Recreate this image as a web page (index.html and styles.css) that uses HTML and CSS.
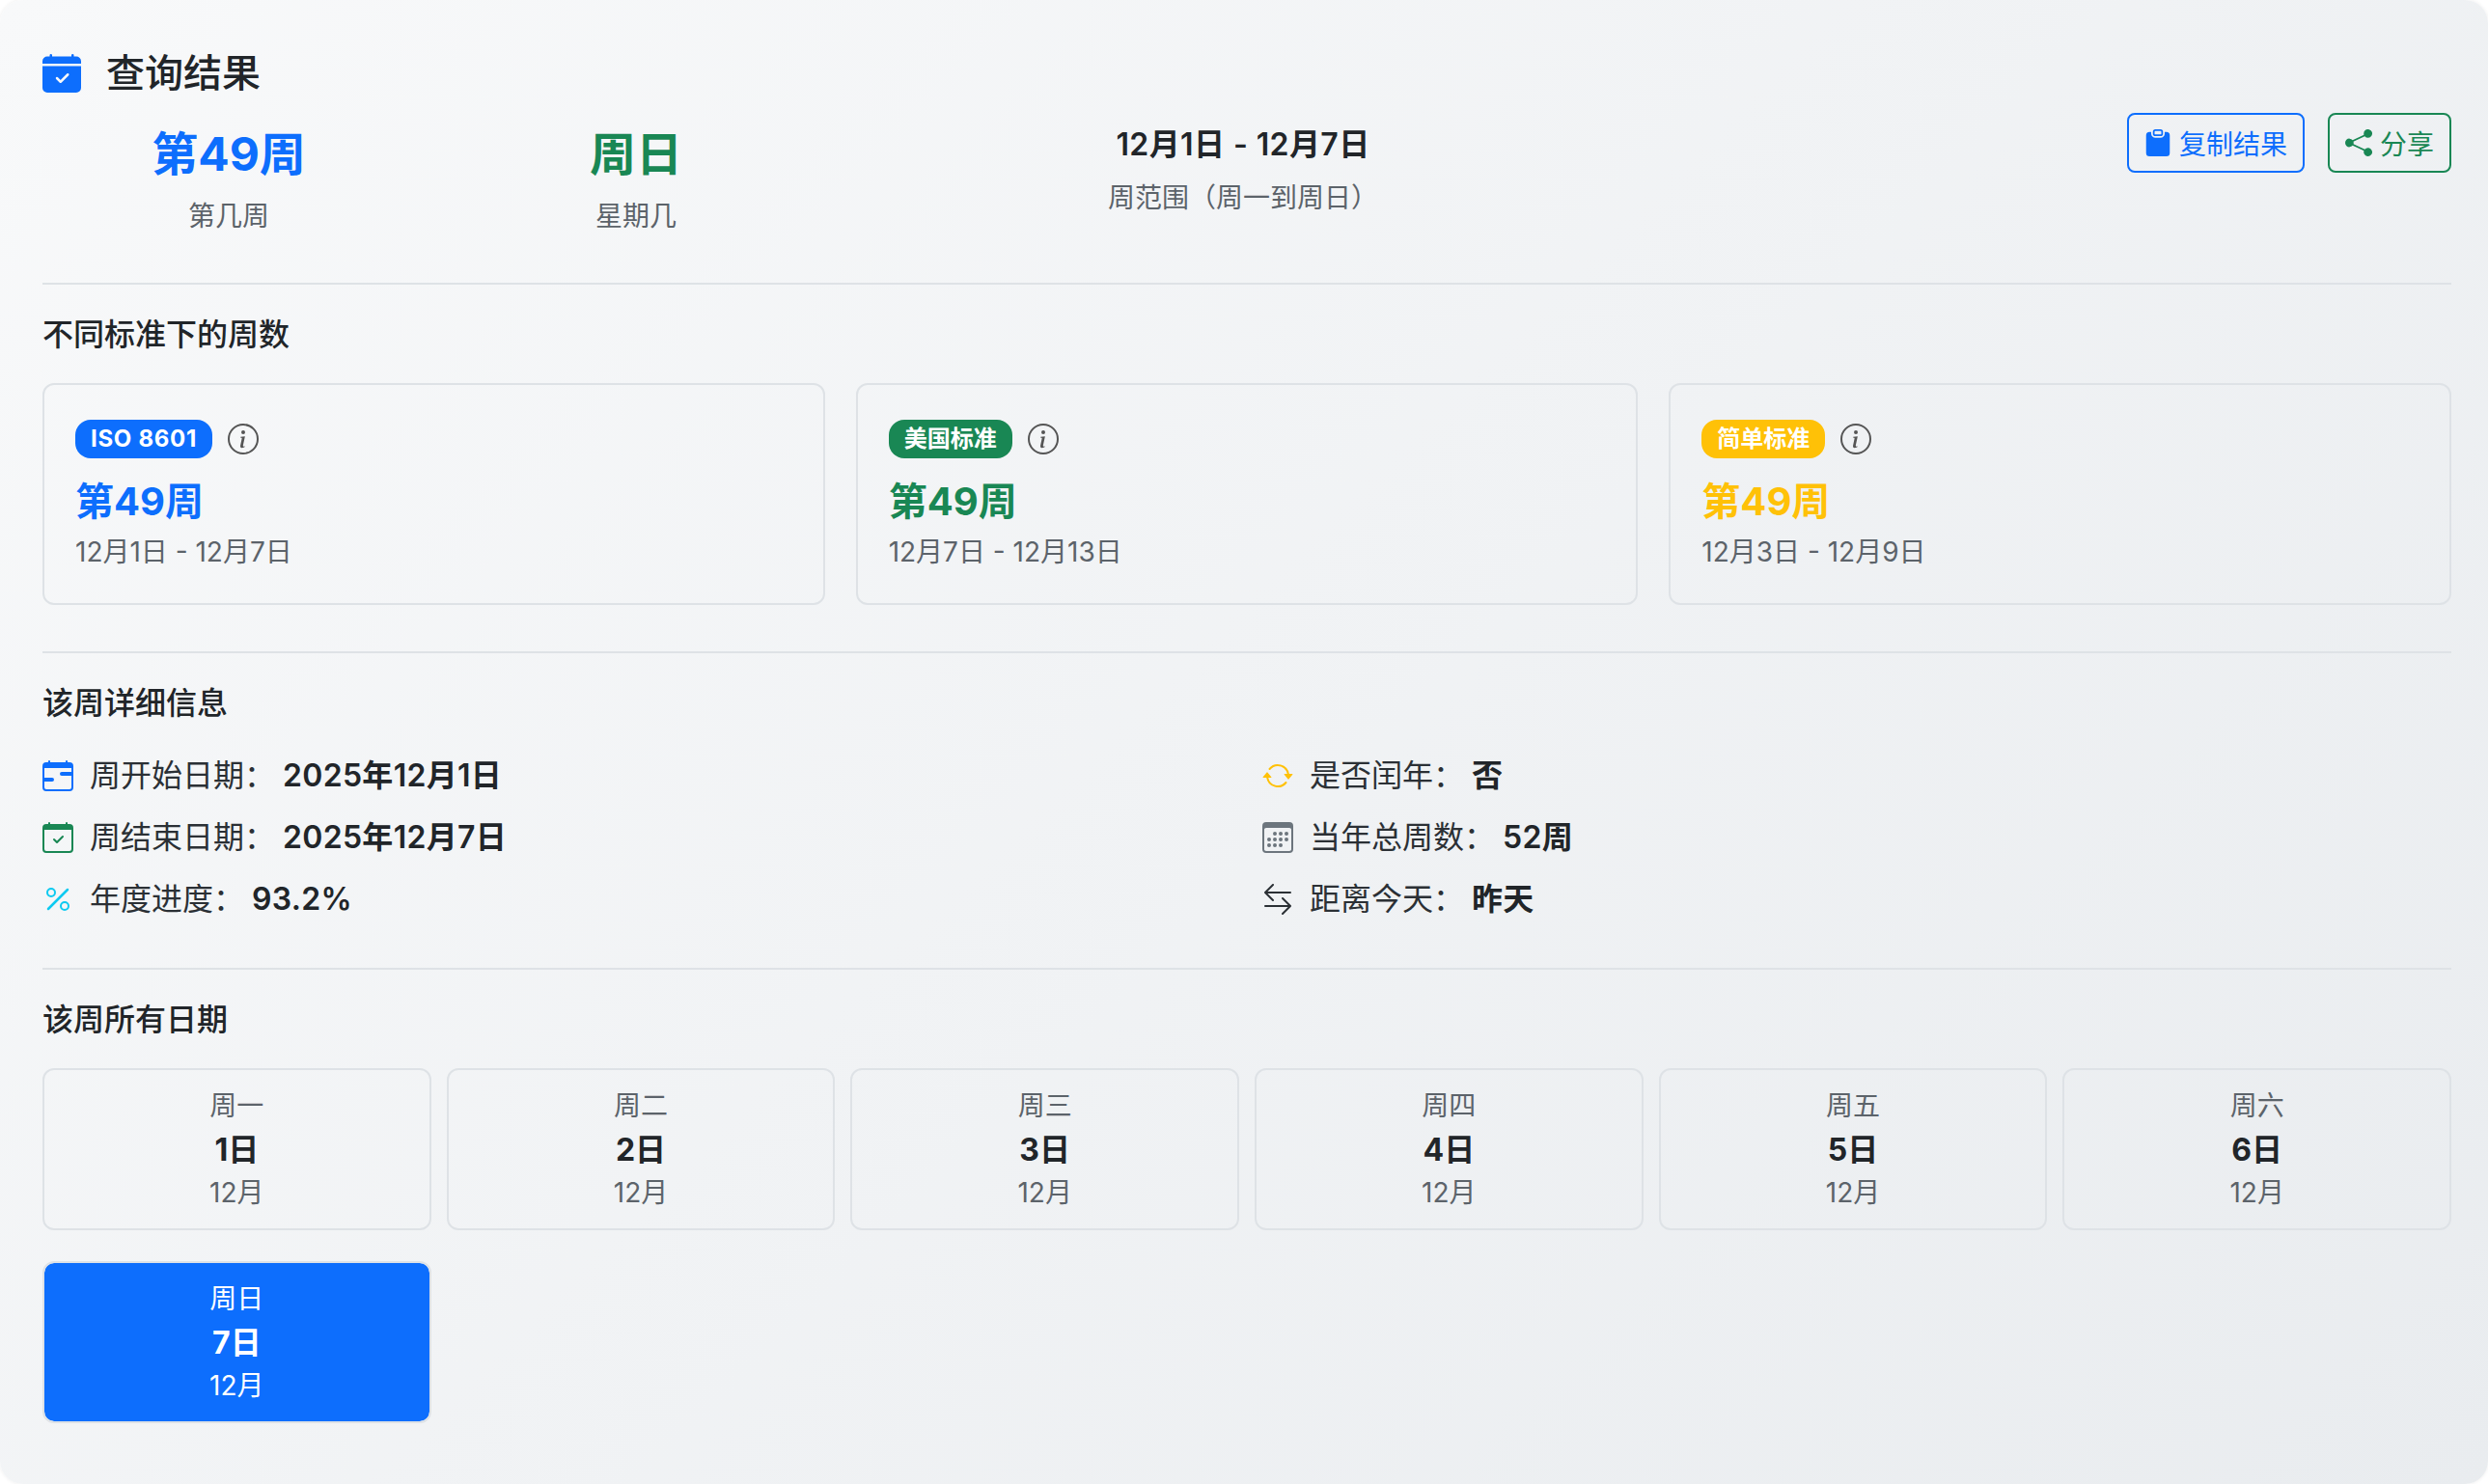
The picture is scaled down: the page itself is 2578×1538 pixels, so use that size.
FILE: index.html
```html
<!DOCTYPE html>
<html lang="zh-CN">
<head>
  <meta charset="UTF-8" />
  <meta name="viewport" content="width=device-width, initial-scale=1.0">
  <title>查询结果</title>
  <link rel="stylesheet" href="styles.css">
</head>
<body>
  <svg class="sprite" xmlns="http://www.w3.org/2000/svg">
    <symbol id="i-calendar-check-fill" viewBox="0 0 16 16"><path d="M4 .5a.5.5 0 0 0-1 0V1H2a2 2 0 0 0-2 2v1h16V3a2 2 0 0 0-2-2h-1V.5a.5.5 0 0 0-1 0V1H4V.5zM16 14V5H0v9a2 2 0 0 0 2 2h12a2 2 0 0 0 2-2zm-5.146-5.146-3 3a.5.5 0 0 1-.708 0l-1.5-1.5a.5.5 0 0 1 .708-.708L7.5 10.793l2.646-2.647a.5.5 0 0 1 .708.708z"/></symbol>
    <symbol id="i-clipboard-fill" viewBox="0 0 16 16"><path fill-rule="evenodd" d="M10 1.5a.5.5 0 0 0-.5-.5h-3a.5.5 0 0 0-.5.5v1a.5.5 0 0 0 .5.5h3a.5.5 0 0 0 .5-.5v-1Zm-5 0A1.5 1.5 0 0 1 6.5 0h3A1.5 1.5 0 0 1 11 1.5v1A1.5 1.5 0 0 1 9.5 4h-3A1.5 1.5 0 0 1 5 2.5v-1Zm-2 0h1v1A2.5 2.5 0 0 0 6.5 5h3A2.5 2.5 0 0 0 12 2.5v-1h1a2 2 0 0 1 2 2V14a2 2 0 0 1-2 2H3a2 2 0 0 1-2-2V3.5a2 2 0 0 1 2-2Z"/></symbol>
    <symbol id="i-share-fill" viewBox="0 0 16 16"><path d="M11 2.5a2.5 2.5 0 1 1 .603 1.628l-6.718 3.12a2.499 2.499 0 0 1 0 1.504l6.718 3.12a2.5 2.5 0 1 1-.488.876l-6.718-3.12a2.5 2.5 0 1 1 0-3.256l6.718-3.12A2.5 2.5 0 0 1 11 2.5z"/></symbol>
    <symbol id="i-info-circle" viewBox="0 0 16 16"><path d="M8 15A7 7 0 1 1 8 1a7 7 0 0 1 0 14zm0 1A8 8 0 1 0 8 0a8 8 0 0 0 0 16z"/><path d="m8.93 6.588-2.29.287-.082.38.45.083c.294.07.352.176.288.469l-.738 3.468c-.194.897.105 1.319.808 1.319.545 0 1.178-.252 1.465-.598l.088-.42c-.2.176-.492.246-.686.246-.275 0-.375-.193-.304-.533L8.93 6.588zM9 4.5a1 1 0 1 1-2 0 1 1 0 0 1 2 0z"/></symbol>
    <symbol id="i-calendar-range" viewBox="0 0 16 16"><path d="M9 7a1 1 0 0 1 1-1h5v2h-5a1 1 0 0 1-1-1zM1 9h4a1 1 0 0 1 0 2H1V9z"/><path d="M3.5 0a.5.5 0 0 1 .5.5V1h8V.5a.5.5 0 0 1 1 0V1h1a2 2 0 0 1 2 2v11a2 2 0 0 1-2 2H2a2 2 0 0 1-2-2V3a2 2 0 0 1 2-2h1V.5a.5.5 0 0 1 .5-.5zM1 4v10a1 1 0 0 0 1 1h12a1 1 0 0 0 1-1V4H1z"/></symbol>
    <symbol id="i-calendar-check" viewBox="0 0 16 16"><path d="M10.854 7.146a.5.5 0 0 1 0 .708l-3 3a.5.5 0 0 1-.708 0l-1.5-1.5a.5.5 0 1 1 .708-.708L7.5 9.793l2.646-2.647a.5.5 0 0 1 .708 0z"/><path d="M3.5 0a.5.5 0 0 1 .5.5V1h8V.5a.5.5 0 0 1 1 0V1h1a2 2 0 0 1 2 2v11a2 2 0 0 1-2 2H2a2 2 0 0 1-2-2V3a2 2 0 0 1 2-2h1V.5a.5.5 0 0 1 .5-.5zM1 4v10a1 1 0 0 0 1 1h12a1 1 0 0 0 1-1V4H1z"/></symbol>
    <symbol id="i-percent" viewBox="0 0 16 16"><path d="M13.442 2.558a.625.625 0 0 1 0 .884l-10 10a.625.625 0 1 1-.884-.884l10-10a.625.625 0 0 1 .884 0zM4.5 6a1.5 1.5 0 1 1 0-3 1.5 1.5 0 0 1 0 3zm0 1a2.5 2.5 0 1 0 0-5 2.5 2.5 0 0 0 0 5zm7 6a1.5 1.5 0 1 1 0-3 1.5 1.5 0 0 1 0 3zm0 1a2.5 2.5 0 1 0 0-5 2.5 2.5 0 0 0 0 5z"/></symbol>
    <symbol id="i-arrow-repeat" viewBox="0 0 16 16"><path d="M11.534 7h3.932a.25.25 0 0 1 .192.41l-1.966 2.36a.25.25 0 0 1-.384 0l-1.966-2.36a.25.25 0 0 1 .192-.41zm-11 2h3.932a.25.25 0 0 0 .192-.41L2.692 6.23a.25.25 0 0 0-.384 0L.342 8.59A.25.25 0 0 0 .534 9z"/><path fill-rule="evenodd" d="M8 3c-1.552 0-2.94.707-3.857 1.818a.5.5 0 1 1-.771-.636A6.002 6.002 0 0 1 13.917 7H12.9A5.002 5.002 0 0 0 8 3zM3.1 9a5.002 5.002 0 0 0 8.757 2.182.5.5 0 1 1 .771.636A6.002 6.002 0 0 1 2.083 9H3.1z"/></symbol>
    <symbol id="i-calendar3" viewBox="0 0 16 16"><path d="M14 0H2a2 2 0 0 0-2 2v12a2 2 0 0 0 2 2h12a2 2 0 0 0 2-2V2a2 2 0 0 0-2-2zM1 3.857C1 3.384 1.448 3 2 3h12c.552 0 1 .384 1 .857v10.286c0 .473-.448.857-1 .857H2c-.552 0-1-.384-1-.857V3.857z"/><path d="M6.5 7a1 1 0 1 0 0-2 1 1 0 0 0 0 2zm3 0a1 1 0 1 0 0-2 1 1 0 0 0 0 2zm3 0a1 1 0 1 0 0-2 1 1 0 0 0 0 2zm-9 3a1 1 0 1 0 0-2 1 1 0 0 0 0 2zm3 0a1 1 0 1 0 0-2 1 1 0 0 0 0 2zm3 0a1 1 0 1 0 0-2 1 1 0 0 0 0 2zm3 0a1 1 0 1 0 0-2 1 1 0 0 0 0 2zm-9 3a1 1 0 1 0 0-2 1 1 0 0 0 0 2zm3 0a1 1 0 1 0 0-2 1 1 0 0 0 0 2zm3 0a1 1 0 1 0 0-2 1 1 0 0 0 0 2z"/></symbol>
    <symbol id="i-arrow-left-right" viewBox="0 0 16 16"><path fill-rule="evenodd" d="M1 11.5a.5.5 0 0 0 .5.5h11.793l-3.147 3.146a.5.5 0 0 0 .708.708l4-4a.5.5 0 0 0 0-.708l-4-4a.5.5 0 0 0-.708.708L13.293 11H1.5a.5.5 0 0 0-.5.5zm14-7a.5.5 0 0 1-.5.5H2.707l3.147 3.146a.5.5 0 1 1-.708.708l-4-4a.5.5 0 0 1 0-.708l4-4a.5.5 0 1 1 .708.708L2.707 4H14.5a.5.5 0 0 1 .5.5z"/></symbol>
  </svg>

  <div class="resultado">
    <h2 class="cabecera">
      <svg class="icono icono-titulo azul"><use href="#i-calendar-check-fill"/></svg>
      查询结果
    </h2>

    <div class="resumen">
      <div class="dato">
        <div class="dato-grande azul">第49周</div>
        <div class="dato-nombre">第几周</div>
      </div>
      <div class="dato">
        <div class="dato-grande verde">周日</div>
        <div class="dato-nombre">星期几</div>
      </div>
      <div class="dato dato-rango">
        <div class="rango-valor">12月1日 - 12月7日</div>
        <div class="dato-nombre">周范围（周一到周日）</div>
      </div>
      <div class="acciones">
        <button class="boton boton-azul"><svg class="icono"><use href="#i-clipboard-fill"/></svg>复制结果</button>
        <button class="boton boton-verde"><svg class="icono"><use href="#i-share-fill"/></svg>分享</button>
      </div>
    </div>

    <hr class="separador">

    <h3 class="subtitulo">不同标准下的周数</h3>
    <div class="estandares">
      <div class="tarjeta">
        <div class="tarjeta-top">
          <span class="etiqueta etiqueta-latina fondo-azul">ISO 8601</span>
          <svg class="icono icono-info"><use href="#i-info-circle"/></svg>
        </div>
        <div class="semana azul">第49周</div>
        <div class="rango">12月1日 - 12月7日</div>
      </div>
      <div class="tarjeta">
        <div class="tarjeta-top">
          <span class="etiqueta fondo-verde">美国标准</span>
          <svg class="icono icono-info"><use href="#i-info-circle"/></svg>
        </div>
        <div class="semana verde">第49周</div>
        <div class="rango">12月7日 - 12月13日</div>
      </div>
      <div class="tarjeta">
        <div class="tarjeta-top">
          <span class="etiqueta fondo-amarillo">简单标准</span>
          <svg class="icono icono-info"><use href="#i-info-circle"/></svg>
        </div>
        <div class="semana amarillo">第49周</div>
        <div class="rango">12月3日 - 12月9日</div>
      </div>
    </div>

    <hr class="separador">

    <h3 class="subtitulo">该周详细信息</h3>
    <div class="detalles">
      <div class="detalle"><svg class="icono azul"><use href="#i-calendar-range"/></svg><span>周开始日期：</span><strong>2025年12月1日</strong></div>
      <div class="detalle"><svg class="icono amarillo"><use href="#i-arrow-repeat"/></svg><span>是否闰年：</span><strong>否</strong></div>
      <div class="detalle"><svg class="icono verde"><use href="#i-calendar-check"/></svg><span>周结束日期：</span><strong>2025年12月7日</strong></div>
      <div class="detalle"><svg class="icono gris"><use href="#i-calendar3"/></svg><span>当年总周数：</span><strong>52周</strong></div>
      <div class="detalle"><svg class="icono cian"><use href="#i-percent"/></svg><span>年度进度：</span><strong>93.2%</strong></div>
      <div class="detalle"><svg class="icono"><use href="#i-arrow-left-right"/></svg><span>距离今天：</span><strong>昨天</strong></div>
    </div>

    <hr class="separador">

    <h3 class="subtitulo">该周所有日期</h3>
    <div class="dias">
      <div class="dia"><div class="dia-nombre">周一</div><div class="dia-num">1日</div><div class="dia-mes">12月</div></div>
      <div class="dia"><div class="dia-nombre">周二</div><div class="dia-num">2日</div><div class="dia-mes">12月</div></div>
      <div class="dia"><div class="dia-nombre">周三</div><div class="dia-num">3日</div><div class="dia-mes">12月</div></div>
      <div class="dia"><div class="dia-nombre">周四</div><div class="dia-num">4日</div><div class="dia-mes">12月</div></div>
      <div class="dia"><div class="dia-nombre">周五</div><div class="dia-num">5日</div><div class="dia-mes">12月</div></div>
      <div class="dia"><div class="dia-nombre">周六</div><div class="dia-num">6日</div><div class="dia-mes">12月</div></div>
      <div class="dia dia-activo"><div class="dia-nombre">周日</div><div class="dia-num">7日</div><div class="dia-mes">12月</div></div>
    </div>
  </div>
</body>
</html>
```

FILE: styles.css
```css
html, body {
  margin: 0;
  padding: 0;
  height: 100%;
  background: #fff;
  font-family: Inter, "Noto Sans CJK SC", sans-serif;
  font-size: 32px;
  line-height: 1.5;
  color: #212529;
  overflow: hidden;
}

.sprite { display: none; }

.resultado {
  box-sizing: border-box;
  height: 100%;
  padding: 49px 38px 0 44px;
  border-radius: 24px;
  background: linear-gradient(135deg, #f8f9fa 0%, #e9ecef 100%);
  box-shadow: 0 0 4px rgba(0, 0, 0, 0.08);
}

.azul { color: #0d6efd; }
.verde { color: #198754; }
.amarillo { color: #ffc107; }
.gris { color: #6c757d; }
.cian { color: #0dcaf0; }

.icono {
  width: 32px;
  height: 32px;
  fill: currentColor;
  flex-shrink: 0;
}

.cabecera {
  display: flex;
  align-items: center;
  gap: 26px;
  margin: 0;
  height: 54px;
  font-size: 40px;
  font-weight: 500;
  line-height: 54px;
}

.icono-titulo { width: 40px; height: 40px; }

.resumen {
  display: grid;
  grid-template-columns: 386px 458px 800px 1fr;
  height: 182px;
  padding-top: 8px;
}

.dato {
  padding-top: 13px;
  text-align: center;
}

.dato-grande {
  font-size: 48px;
  font-weight: 700;
  line-height: 72px;
}

.dato-nombre {
  font-size: 28px;
  line-height: 42px;
  margin-top: 7px;
  color: #5c636a;
}

.rango-valor {
  font-size: 32px;
  font-weight: 600;
  letter-spacing: 0.4px;
  line-height: 48px;
  margin-top: 2px;
}

.dato-rango .dato-nombre { margin-top: 10px; }

.acciones {
  display: flex;
  justify-content: flex-end;
  align-items: flex-start;
  gap: 24px;
  padding-top: 6px;
}

.boton {
  display: flex;
  align-items: center;
  gap: 8px;
  height: 62px;
  padding: 0 16px;
  background: transparent;
  border: 2px solid;
  border-radius: 8px;
  font-family: inherit;
  font-size: 28px;
}

.boton .icono { width: 28px; height: 28px; }

.boton-azul { color: #0d6efd; border-color: #0d6efd; }
.boton-verde { color: #198754; border-color: #198754; }

.separador {
  margin: 0;
  border: 0;
  border-top: 2px solid #dee2e6;
}

.subtitulo {
  margin: 0;
  font-size: 32px;
  font-weight: 500;
  line-height: 48px;
  padding-top: 28px;
}

.estandares {
  display: grid;
  grid-template-columns: repeat(3, 1fr);
  gap: 32px;
  margin-top: 26px;
  margin-bottom: 48px;
}

.tarjeta {
  box-sizing: border-box;
  height: 230px;
  padding: 36px 32px 0;
  border: 2px solid #dee2e6;
  border-radius: 12px;
}

.tarjeta-top {
  display: flex;
  align-items: center;
  gap: 16px;
  height: 40px;
}

.etiqueta {
  padding: 0 16px;
  border-radius: 16px;
  color: #fff;
  font-size: 24px;
  font-weight: 700;
  line-height: 40px;
}

.etiqueta-latina { letter-spacing: 0.7px; }

.fondo-azul { background: #0d6efd; }
.fondo-verde { background: #198754; }
.fondo-amarillo { background: #ffc107; }

.icono-info { color: #555; }

.semana {
  font-size: 40px;
  font-weight: 700;
  line-height: 60px;
  margin-top: 15px;
}

.rango {
  font-size: 28px;
  line-height: 42px;
  margin-top: 1px;
  color: #5c636a;
}

.detalles {
  display: grid;
  grid-template-columns: repeat(2, 1fr);
  column-gap: 32px;
  row-gap: 16px;
  margin-top: 27px;
  margin-bottom: 47px;
}

.detalle {
  display: flex;
  align-items: center;
  height: 48px;
  color: #2b3035;
}

.detalle .icono { margin-right: 17px; }

.detalle strong {
  margin-left: 8px;
  font-weight: 600;
  letter-spacing: 0.3px;
  color: #212529;
}

.dias {
  display: grid;
  grid-template-columns: repeat(6, 1fr);
  column-gap: 16px;
  row-gap: 32px;
  margin-top: 26px;
}

.dia {
  box-sizing: border-box;
  height: 168px;
  padding: 16px;
  border: 2px solid #dee2e6;
  border-radius: 12px;
  text-align: center;
}

.dia-nombre, .dia-mes {
  font-size: 28px;
  color: #5c636a;
}

.dia-nombre { line-height: 43px; }
.dia-mes { line-height: 41px; }

.dia-num {
  font-size: 32px;
  font-weight: 700;
  line-height: 48px;
}

.dia-activo {
  background: #0d6efd;
  background-clip: padding-box;
  color: #fff;
}

.dia-activo .dia-nombre, .dia-activo .dia-mes { color: #fff; }
```
